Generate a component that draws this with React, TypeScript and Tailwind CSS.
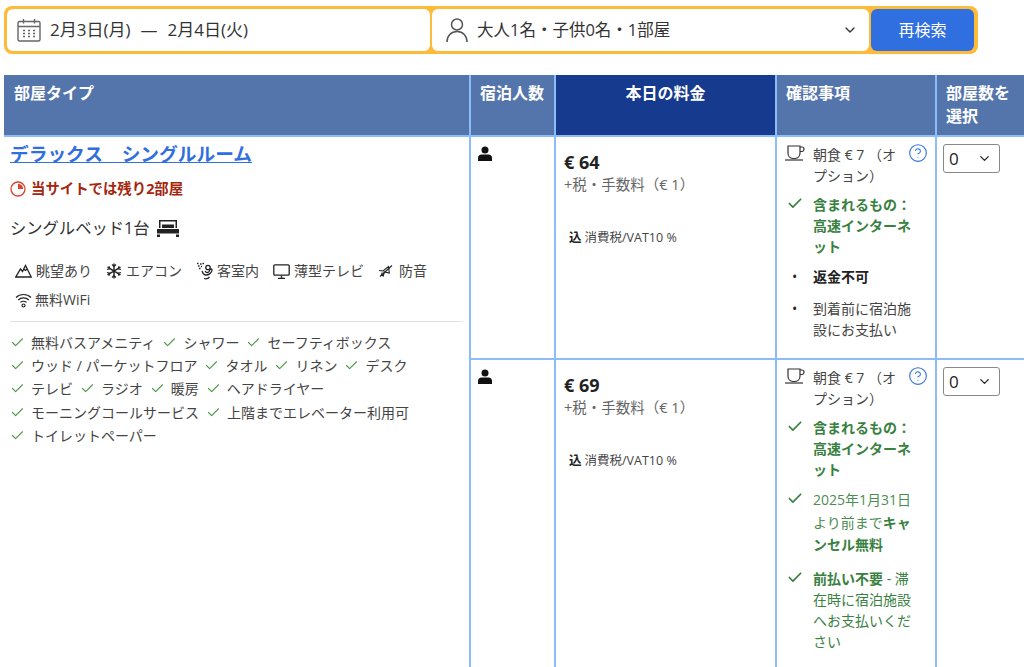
import { ChevronDown, Check, CircleHelp } from 'lucide-react'

const facilities = [
  ['無料バスアメニティ', 'シャワー', 'セーフティボックス'],
  ['ウッド / パーケットフロア', 'タオル', 'リネン', 'デスク'],
  ['テレビ', 'ラジオ', '暖房', 'ヘアドライヤー'],
  ['モーニングコールサービス', '上階までエレベーター利用可'],
  ['トイレットペーパー'],
]

function CalendarIcon() {
  return (
    <svg width="24" height="24" viewBox="0 0 24 24" fill="none" stroke="#666" strokeWidth="1.4" aria-hidden="true">
      <rect x="1" y="3.5" width="22" height="19.5" rx="1.5" />
      <path d="M1 8.5h22M6.5 1v4.5M17.5 1v4.5" />
      <path d="M6 12.500h2M11 12.500h2M16 12.500h2M6 15.500h2M11 15.500h2M16 15.500h2M6 18.500h2M11 18.500h2M16 18.500h2" strokeWidth="1.5" />
    </svg>
  )
}

function UserOutline() {
  return (
    <svg width="24" height="26" viewBox="0 0 24 26" fill="none" stroke="#555" strokeWidth="1.5" aria-hidden="true">
      <circle cx="12" cy="7.5" r="5.5" />
      <path d="M2 25c0-6 4-10.500 10-10.500S22 19 22 25" />
    </svg>
  )
}

function PersonSolid() {
  return (
    <svg width="14" height="16" viewBox="0 0 14 16" fill="#111" aria-hidden="true">
      <circle cx="7" cy="4" r="3.5" />
      <path d="M0 15v-3c0-2 1.500-3.500 3.500-3.500h7c2 0 3.500 1.500 3.500 3.500v3z" />
    </svg>
  )
}

function BedIcon() {
  return (
    <svg width="24" height="17" viewBox="0 0 24 17" fill="#222" aria-hidden="true">
      <path d="M3 0h18v8h-1.500V1.500h-15V8H3z" />
      <path d="M1 9h22v4.500H1z" />
      <path d="M6 4.500h12V8H6zM1 14.500h3V17H1zM20 14.500h3V17h-3z" />
    </svg>
  )
}

function MountainIcon() {
  return (
    <svg width="17" height="14" viewBox="0 0 17 14" fill="none" stroke="#222" strokeWidth="1.3" aria-hidden="true">
      <path d="M.8 13h15.400L10.500 1.500 7.500 7.500 5.500 5z" />
      <path d="M8.500 5l2 1.500 1.500-1.500" />
    </svg>
  )
}

function SnowIcon() {
  return (
    <svg width="16" height="16" viewBox="0 0 16 16" fill="none" stroke="#222" strokeWidth="1.4" aria-hidden="true">
      <path d="M8 .5v15M1.500 4.200l13 7.600M1.500 11.800l13-7.600" />
      <path d="M6 1.500l2 2 2-2M6 14.500l2-2 2 2M1 6.500l2.800-.6-.8-2.700M15 9.500l-2.800.6.8 2.700M1 9.500l2.800.6-.8 2.700M15 6.500l-2.800-.6.8-2.700" strokeWidth="1.1" />
    </svg>
  )
}

function GardenIcon() {
  return (
    <svg width="18" height="18" viewBox="0 0 18 18" fill="none" stroke="#222" strokeWidth="1.3" aria-hidden="true">
      <path d="M1 1.500h1.500M4 2h1.500M6.500 1.500H8M2 4h1.500M5 4.500h1M3 6.500h1.500" />
      <circle cx="12" cy="5.500" r="2.200" />
      <path d="M6 9c1 3 2.500 4 4 4 2.500 0 6-2 6-5 0-1-1-1.500-1.800-.8-.8.800-.2 3-2.600 3.300-1.200.2-2-.5-2.500-1.500M8 16.500c2 .8 4 .3 5.500-1.500" />
    </svg>
  )
}

function ScreenIcon() {
  return (
    <svg width="17" height="15" viewBox="0 0 17 15" fill="none" stroke="#222" strokeWidth="1.3" aria-hidden="true">
      <rect x=".8" y=".8" width="15.400" height="10.400" rx="1" />
      <path d="M8.500 11.500v2.500M5 14.300h7" />
    </svg>
  )
}

function SoundproofIcon() {
  return (
    <svg width="15" height="14" viewBox="0 0 15 14" fill="none" stroke="#222" strokeWidth="1.1" aria-hidden="true">
      <path d="M1 6.500l4 .5 5.500-4.500.8 6.500-5-1-1 4-2-.8 1-2.700" />
      <path d="M2 12.500L14 1.500" />
    </svg>
  )
}

function WifiIcon() {
  return (
    <svg width="17" height="16" viewBox="0 0 17 16" fill="none" stroke="#222" strokeWidth="1.2" aria-hidden="true">
      <path d="M1 5.500c4-4 11-4 15 0M3.200 8c2.800-2.800 7.800-2.800 10.600 0M5.400 10.400c1.700-1.500 4.500-1.500 6.200 0" />
      <circle cx="8.500" cy="13.500" r="1.500" />
    </svg>
  )
}

function CupIcon() {
  return (
    <svg width="20" height="16" viewBox="0 0 20 16" fill="none" stroke="#333" strokeWidth="1.2" aria-hidden="true">
      <path d="M3 1h12v7c0 3-2 5.500-5 5.500H8c-3 0-5-2.500-5-5.500z" />
      <path d="M15 2h2c1.200 0 2 .8 2 2s-.8 2.500-2 2.500h-2" />
      <path d="M0 15h18" />
    </svg>
  )
}

function ConditionCell({ refundable }: { refundable: boolean }) {
  return (
    <td className="border-2 border-[#8cbdf8] px-2 pt-[7px] align-top">
      <div className="relative flex gap-2">
        <span className="w-5 shrink-0 pt-[1px]">
          <CupIcon />
        </span>
        <p className="w-[85px] leading-[21px] text-[#444]">朝食 € 7 （オプション）</p>
        <CircleHelp className="absolute right-[-1px] top-[-1px] h-[20px] w-[20px] text-[#2f6fe0]" strokeWidth={1.3} />
      </div>
      <div className="mt-[8px] flex gap-2 text-[#39813f]">
        <Check className="mt-[1px] h-[17px] w-5 shrink-0" strokeWidth={2.4} />
        <p className="w-[100px] font-bold leading-[21px]">含まれるもの：高速インターネット</p>
      </div>
      {refundable ? (
        <>
          <div className="mt-[9px] flex gap-2 text-[#39813f]">
            <Check className="mt-[1px] h-[17px] w-5 shrink-0" strokeWidth={2.4} />
            <p className="w-[100px] leading-[22.500px]">
              <span className="opacity-90">2025年1月31日より前まで</span>
              <b>キャンセル無料</b>
            </p>
          </div>
          <div className="mt-[11px] flex gap-2 text-[#39813f]">
            <Check className="mt-[1px] h-[17px] w-5 shrink-0" strokeWidth={2.4} />
            <p className="w-[100px] leading-[21px]">
              <b>前払い不要</b> - 滞在時に宿泊施設へお支払いください
            </p>
          </div>
        </>
      ) : (
        <>
          <div className="mt-[9px] flex gap-2">
            <span className="w-5 shrink-0 pl-[7px] text-[#222]">•</span>
            <p className="font-bold leading-[21px] text-[#222]">返金不可</p>
          </div>
          <div className="mt-[11px] flex gap-2">
            <span className="w-5 shrink-0 pl-[7px] text-[#222]">•</span>
            <p className="w-[100px] leading-[21px] text-[#444]">到着前に宿泊施設にお支払い</p>
          </div>
        </>
      )}
    </td>
  )
}

function PriceCell({ price }: { price: string }) {
  return (
    <td className="border-2 border-[#8cbdf8] px-2 pt-[12px] align-top">
      <p className="text-[18px] font-bold leading-[26px] text-[#222]">€ {price}</p>
      <p className="text-[14.500px] leading-[20px] text-[#666]">+税・手数料（€ 1）</p>
      <p className="mt-[34px] pl-[5px] text-[12.500px] leading-[18px] text-[#444]">
        <b className="mr-[3px] text-[#222]">込</b>消費税/VAT10 %
      </p>
    </td>
  )
}

function QtyCell() {
  return (
    <td className="border-2 border-[#8cbdf8] pl-[6px] pt-[7px] align-top">
      <div className="flex h-[29px] w-[57px] items-center justify-between rounded-[3px] border border-[#888] bg-white pl-[5px] pr-[7px] text-[17px] text-[#222]">
        <span>0</span>
        <ChevronDown className="h-[15px] w-[15px]" strokeWidth={2} />
      </div>
    </td>
  )
}

export default function App() {
  return (
    <div className='h-[667px] overflow-hidden bg-white font-["Open_Sans","Noto_Sans_CJK_JP",sans-serif] text-[14px]'>
      {/* search bar */}
      <div className="pl-1 pt-[6px]">
        <div className="flex h-[48px] w-[974px] gap-[2px] rounded-[8px] bg-[#febb3a] p-[3px]">
          <div className="flex w-[423px] items-center gap-[9px] rounded-[6px] bg-white pl-[10px] text-[17px] text-[#333]">
            <CalendarIcon />
            <span>2月3日(月)</span>
            <span className="mx-[1px]">—</span>
            <span>2月4日(火)</span>
          </div>
          <div className="flex w-[437px] items-center rounded-[6px] bg-white pl-[13px] pr-[11px] text-[16.500px] text-[#333]">
            <UserOutline />
            <span className="ml-[8px] flex-1">大人1名・子供0名・1部屋</span>
            <ChevronDown className="h-[16px] w-[16px]" strokeWidth={2} />
          </div>
          <button type="button" className="w-[103px] rounded-[6px] bg-[#2f6fe0] text-[16px] text-white">
            再検索
          </button>
        </div>
      </div>

      {/* rooms table */}
      <div className="pl-1 pt-[21px]">
        <table className="w-[1029px] table-fixed border-collapse">
          <colgroup>
            <col className="w-[465px]" />
            <col className="w-[85px]" />
            <col className="w-[221px]" />
            <col className="w-[160px]" />
            <col className="w-[98px]" />
          </colgroup>
          <thead>
            <tr className="h-[60px] text-left text-[16px] font-bold leading-[23px] text-white">
              <th className="border-2 border-[#8cbdf8] border-l-[#5475ab] border-t-[#5475ab] bg-[#5475ab] pl-[8px] pr-[9px] pt-[5px] align-top">部屋タイプ</th>
              <th className="border-2 border-[#8cbdf8] border-t-[#5475ab] bg-[#5475ab] px-[9px] pt-[5px] align-top">宿泊人数</th>
              <th className="border-2 border-[#8cbdf8] border-t-[#163a8e] bg-[#163a8e] px-[9px] pt-[5px] text-center align-top">本日の料金</th>
              <th className="border-2 border-[#8cbdf8] border-t-[#5475ab] bg-[#5475ab] px-[9px] pt-[5px] align-top">確認事項</th>
              <th className="border-2 border-[#8cbdf8] border-t-[#5475ab] bg-[#5475ab] px-[9px] pt-[5px] align-top">
                <span className="block w-[70px]">部屋数を選択</span>
              </th>
            </tr>
          </thead>
          <tbody>
            <tr className="h-[223px]">
              <td rowSpan={2} className="border-2 border-l-0 border-[#8cbdf8] pl-[5px] pr-[6px] pt-[3px] align-top">
                <a href="#" className="text-[18.720px] font-bold leading-[28px] text-[#2f6fe0] underline">
                  デラックス　シングルルーム
                </a>
                <div className="mt-[10px] flex items-center gap-[5px] text-[#a3260f]">
                  <svg width="16" height="16" viewBox="0 0 16 16" aria-hidden="true">
                    <circle cx="8" cy="8" r="7" fill="none" stroke="#d9432c" strokeWidth="1.3" />
                    <path d="M8 2.800a5.200 5.200 0 0 1 5.200 5.200H8z" fill="#d9432c" />
                  </svg>
                  <span className="text-[14.400px] font-bold leading-[21px]">当サイトでは残り2部屋</span>
                </div>
                <div className="mt-[17px] flex items-center gap-[6px] text-[16.300px] leading-[24px] text-[#333]">
                  シングルベッド1台
                  <BedIcon />
                </div>
                <div className="mt-[21px] flex flex-wrap gap-x-[11px] gap-y-[9px] pl-[5px] text-[14px] leading-[20px] text-[#444]">
                  <span className="flex items-center gap-[4px]"><MountainIcon />眺望あり</span>
                  <span className="ml-[3px] flex items-center gap-[4px]"><SnowIcon />エアコン</span>
                  <span className="ml-[3px] flex items-center gap-[3px]"><GardenIcon />客室内</span>
                  <span className="ml-[3px] flex items-center gap-[4px]"><ScreenIcon />薄型テレビ</span>
                  <span className="ml-[3px] flex items-center gap-[6px]"><SoundproofIcon />防音</span>
                  <span className="flex w-full items-center gap-[3px]"><WifiIcon />無料WiFi</span>
                </div>
                <div className="mt-[11px] w-[453px] border-t border-[#e2e2e2] pt-[9px]">
                  {facilities.map((row) => (
                    <div key={row[0]} className="flex h-[23.200px] items-center gap-[7px] text-[#444]">
                      {row.map((item) => (
                        <span key={item} className="flex items-center gap-[6px]">
                          <Check className="h-[15px] w-[15px] text-[#4f9a4a]" strokeWidth={1.8} />
                          {item}
                        </span>
                      ))}
                    </div>
                  ))}
                </div>
              </td>
              <td className="border-2 border-[#8cbdf8] pl-[7px] pt-[9px] align-top">
                <PersonSolid />
              </td>
              <PriceCell price="64" />
              <ConditionCell refundable={false} />
              <QtyCell />
            </tr>
            <tr className="h-[340px]">
              <td className="border-2 border-[#8cbdf8] pl-[7px] pt-[9px] align-top">
                <PersonSolid />
              </td>
              <PriceCell price="69" />
              <ConditionCell refundable />
              <QtyCell />
            </tr>
          </tbody>
        </table>
      </div>
    </div>
  )
}
